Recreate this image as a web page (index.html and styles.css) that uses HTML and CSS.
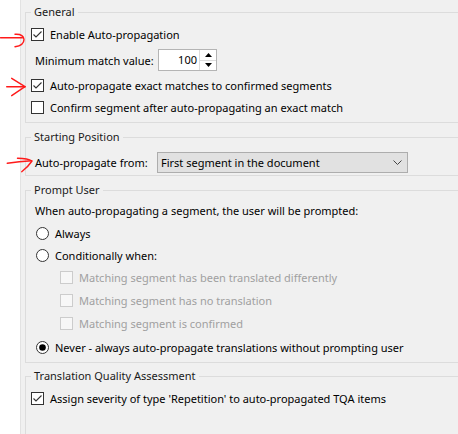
FILE: index.html
```html
<!DOCTYPE html>
<html>
<head>
<meta charset="utf-8">
<link rel="stylesheet" href="styles.css">
</head>
<body>
<div class="panel">
  <fieldset class="group g-general">
    <legend>General</legend>
    <div class="row r1">
      <span class="cb"><svg width="13" height="13" viewBox="0 0 13 13"><rect x="0.5" y="0.5" width="12" height="12" fill="#fff" stroke="#333"/><polyline points="2.5,6.5 5,9 10.5,3.5" fill="none" stroke="#333" stroke-width="1.1"/></svg></span>
      <span>Enable Auto-propagation</span>
    </div>
    <div class="row r2 indent">
      <span class="lbl lbl-min">Minimum match value:</span>
      <div class="spin">
        <div class="spin-val">100</div>
        <div class="spin-btns">
          <div class="spin-btn"><svg width="7" height="4" viewBox="0 0 7 4"><polygon points="3.5,0 7,4 0,4" fill="#000"/></svg></div>
          <div class="spin-btn"><svg width="7" height="4" viewBox="0 0 7 4"><polygon points="0,0 7,0 3.5,4" fill="#000"/></svg></div>
        </div>
      </div>
    </div>
    <div class="row r3">
      <span class="cb"><svg width="13" height="13" viewBox="0 0 13 13"><rect x="0.5" y="0.5" width="12" height="12" fill="#fff" stroke="#333"/><polyline points="2.5,6.5 5,9 10.5,3.5" fill="none" stroke="#333" stroke-width="1.1"/></svg></span>
      <span>Auto-propagate exact matches to confirmed segments</span>
    </div>
    <div class="row r4">
      <span class="cb"><svg width="13" height="13" viewBox="0 0 13 13"><rect x="0.5" y="0.5" width="12" height="12" fill="#fff" stroke="#333"/></svg></span>
      <span>Confirm segment after auto-propagating an exact match</span>
    </div>
  </fieldset>

  <fieldset class="group g-start">
    <legend>Starting Position</legend>
    <div class="row indent">
      <span class="lbl lbl-from">Auto-propagate from:</span>
      <div class="combo">
        <span class="combo-text">First segment in the document</span>
        <svg class="combo-arrow" width="9" height="5" viewBox="0 0 9 5"><polyline points="0.5,0.5 4.5,4.5 8.5,0.5" fill="none" stroke="#444" stroke-width="1"/></svg>
      </div>
    </div>
  </fieldset>

  <fieldset class="group g-prompt">
    <legend>Prompt User</legend>
    <div class="row indent">When auto-propagating a segment, the user will be prompted:</div>
    <div class="row indent p-always">
      <span class="rb"><svg width="13" height="13" viewBox="0 0 13 13"><circle cx="6.5" cy="6.5" r="6" fill="#fff" stroke="#333"/></svg></span>
      <span>Always</span>
    </div>
    <div class="row indent">
      <span class="rb"><svg width="13" height="13" viewBox="0 0 13 13"><circle cx="6.5" cy="6.5" r="6" fill="#fff" stroke="#333"/></svg></span>
      <span>Conditionally when:</span>
    </div>
    <div class="row sub">
      <span class="cb"><svg width="13" height="13" viewBox="0 0 13 13"><rect x="0.5" y="0.5" width="12" height="12" fill="#f7f7f7" stroke="#cccccc"/></svg></span>
      <span class="dis">Matching segment has been translated differently</span>
    </div>
    <div class="row sub p-gap1">
      <span class="cb"><svg width="13" height="13" viewBox="0 0 13 13"><rect x="0.5" y="0.5" width="12" height="12" fill="#f7f7f7" stroke="#cccccc"/></svg></span>
      <span class="dis">Matching segment has no translation</span>
    </div>
    <div class="row sub p-gap1">
      <span class="cb"><svg width="13" height="13" viewBox="0 0 13 13"><rect x="0.5" y="0.5" width="12" height="12" fill="#f7f7f7" stroke="#cccccc"/></svg></span>
      <span class="dis">Matching segment is confirmed</span>
    </div>
    <div class="row indent p-never">
      <span class="rb"><svg width="13" height="13" viewBox="0 0 13 13"><circle cx="6.5" cy="6.5" r="6" fill="#fff" stroke="#333"/><circle cx="6.5" cy="6.5" r="3.3" fill="#000"/></svg></span>
      <span>Never - always auto-propagate translations without prompting user</span>
    </div>
  </fieldset>

  <fieldset class="group g-tqa">
    <legend>Translation Quality Assessment</legend>
    <div class="row">
      <span class="cb"><svg width="13" height="13" viewBox="0 0 13 13"><rect x="0.5" y="0.5" width="12" height="12" fill="#fff" stroke="#333"/><polyline points="2.5,6.5 5,9 10.5,3.5" fill="none" stroke="#333" stroke-width="1.1"/></svg></span>
      <span>Assign severity of type 'Repetition' to auto-propagated TQA items</span>
    </div>
  </fieldset>
</div>

<svg class="marks" width="458" height="434" viewBox="0 0 458 434">
  <g fill="none" stroke="#ff1a1a" stroke-width="1.4" stroke-linecap="round" stroke-linejoin="round">
    <path d="M0.5 37.7 L22.5 37.7"/>
    <path d="M15 34.3 C20 34, 23.5 35, 24 39.5 C24 43.5, 20 46, 15 46.7"/>
    <path d="M11.7 78.3 L25 86.7"/>
    <path d="M6.7 86.7 L25 86.7"/>
    <path d="M25 86.7 L11.7 95.7"/>
    <path d="M7.3 163.3 Q19 161.5 31.7 160.7"/>
    <path d="M17.5 158.3 Q28 158.5 32 161 Q28 167 21.7 171.7"/>
  </g>
</svg>
</body>
</html>
```

FILE: styles.css
```css
* {
  box-sizing: border-box;
}

html,
body {
  margin: 0;
  padding: 0;
}

body {
  position: relative;
  width: 458px;
  height: 434px;
  overflow: hidden;
  background: #ffffff;
  font-family: "Noto Sans", "Liberation Sans", sans-serif;
  font-size: 11px;
  color: #000000;
}

.panel {
  margin-left: 20px;
  height: 434px;
  background: #f0f0f0;
  border-left: 1px solid #e2e2e2;
  padding-top: 5px;
  overflow: hidden;
}

.group {
  width: 520px;
  min-width: 0;
  margin: 0 0 0 4px;
  border: 1px solid #dcdcdc;
  padding: 0 0 0 5px;
  display: flex;
  flex-direction: column;
}

.group legend {
  padding: 0 3px;
  height: 14px;
  line-height: 14px;
  color: #1a1a1a;
}

.row {
  display: flex;
  align-items: center;
  height: 22px;
  white-space: nowrap;
}

.indent {
  padding-left: 4px;
}

.cb,
.rb {
  display: flex;
  width: 13px;
  height: 13px;
  flex: none;
  margin-right: 6px;
}

.rb {
  margin-left: 1px;
}

.sub {
  padding-left: 29px;
}

.dis {
  color: #a0a0a0;
}

.lbl {
  flex: none;
}

/* General */
.g-general {
  padding-top: 4px;
  padding-bottom: 4px;
}

.r2 {
  margin-top: 4px;
}

.r3 {
  margin-top: 3px;
}

.lbl-min {
  width: 123px;
}

.spin {
  display: flex;
  flex: none;
  width: 59px;
  height: 22px;
  border: 1px solid #b4b4b4;
  background: #ffffff;
}

.spin-val {
  flex: 1;
  text-align: right;
  padding-right: 2px;
  line-height: 20px;
}

.spin-btns {
  width: 17px;
  border-left: 1px solid #dcdcdc;
  display: flex;
  flex-direction: column;
}

.spin-btn {
  flex: 1;
  display: flex;
  align-items: center;
  justify-content: center;
}

.spin-btn + .spin-btn {
  border-top: 1px solid #dcdcdc;
}

/* Starting position */
.g-start {
  margin-top: 7px;
  padding-top: 7px;
  padding-bottom: 2px;
}

.lbl-from {
  width: 122px;
}

.combo {
  display: flex;
  flex: none;
  align-items: center;
  width: 251px;
  height: 21px;
  border: 1px solid #adadad;
  background: #e1e1e1;
  padding: 0 5px 0 3px;
}

.combo-text {
  flex: 1;
}

/* Prompt user */
.g-prompt {
  margin-top: 7px;
  padding-top: 2px;
  padding-bottom: 4px;
}

.p-always,
.p-gap1 {
  margin-top: 1px;
}

.p-never {
  margin-top: 2px;
}

/* TQA */
.g-tqa {
  margin-top: 6px;
  padding-top: 4px;
  padding-bottom: 60px;
}

.marks {
  position: absolute;
  left: 0;
  top: 0;
  pointer-events: none;
}
```
